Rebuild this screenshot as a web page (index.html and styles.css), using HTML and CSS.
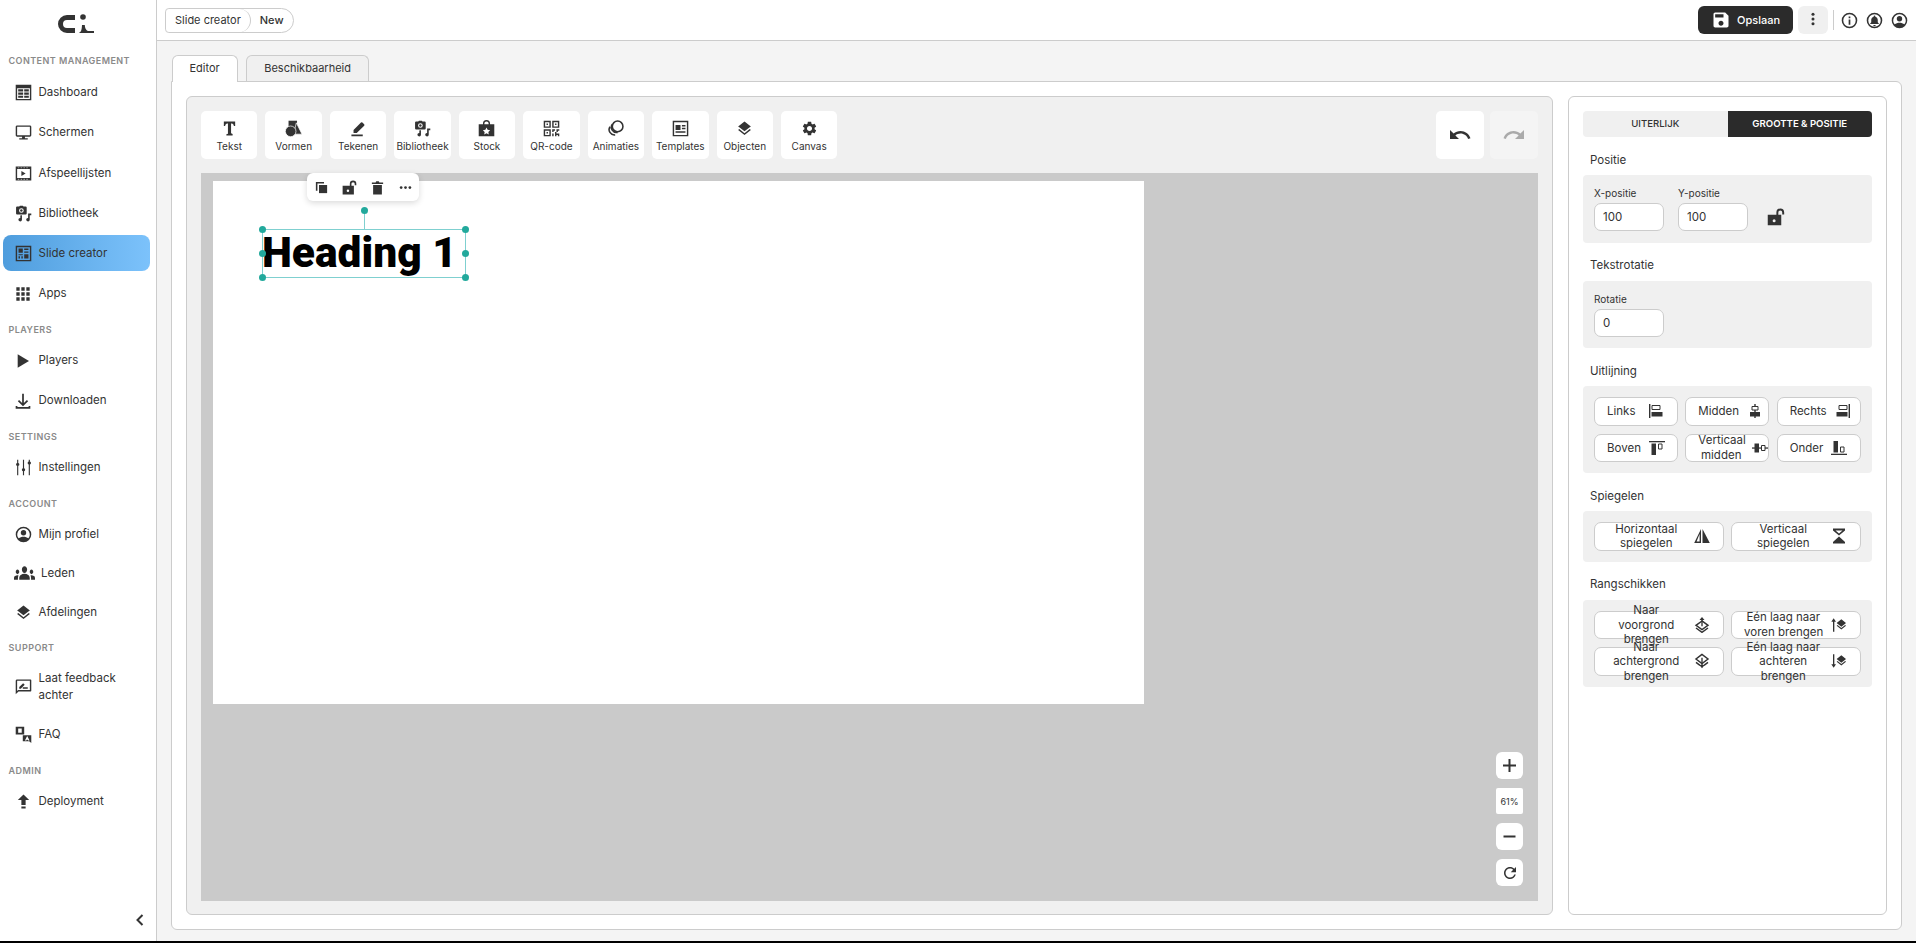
FILE: index.html
```html
<!DOCTYPE html>
<html lang="en">
<head>
    <meta charset="UTF-8">
    <meta name="viewport" content="width=device-width, initial-scale=1.0">
    <title>Slide creator</title>
    <link rel="stylesheet" href="styles.css">
</head>
<body>
    <!-- icon sprite -->
    <svg class="sprite" xmlns="http://www.w3.org/2000/svg">
        <symbol id="i-dashboard" viewBox="0 0 24 24"><path fill-rule="evenodd" d="M1 1h22v22H1zM3 6v15h18V6z"/><path d="M3 2.500h18V4H3zM4.500 7.500h7v3h-7zM13 7.500h6.500v3H13zM4.500 12h7v3h-7zM13 12h6.500v3H13zM4.500 16.500h7v3h-7zM13 16.500h6.500v3H13z"/></symbol>
        <symbol id="i-screen" viewBox="0 0 24 24"><path d="M21 2H3c-1.100 0-2 .9-2 2v12c0 1.100.9 2 2 2h7v2H6v2h12v-2h-4v-2h7c1.100 0 2-.9 2-2V4c0-1.100-.9-2-2-2zm0 14H3V4h18v12z"/></symbol>
        <symbol id="i-playlist" viewBox="0 0 24 24"><path fill-rule="evenodd" d="M1 2h22v20H1zM3 5.500v13h18v-13z"/><path d="M9 8.500v7l6-3.500z"/><path d="M4 3h2v1.500H4zM8 3h2v1.500H8zM12 3h2v1.500h-2zM16 3h2v1.500h-2zM4 19.500h2V21H4zM8 19.500h2V21H8zM12 19.500h2V21h-2zM16 19.500h2V21h-2z" fill="#999"/></symbol>
        <symbol id="i-library" viewBox="0 0 24 24"><path fill-rule="evenodd" d="M3 2h3l1-1h4l1 1h3a1.500 1.500 0 0 1 1.500 1.500V12a1.500 1.500 0 0 1-1.500 1.500H3A1.500 1.500 0 0 1 1.500 12V3.500A1.500 1.500 0 0 1 3 2zm6 2.500a3.300 3.300 0 1 0 0 6.600 3.300 3.300 0 0 0 0-6.600z"/><circle cx="9" cy="7.800" r="1.700"/><path d="M18.500 12h4.500v2.500h-2.200v6.200a2.500 2.500 0 1 1-2.300-2.500zM8 14.500h1.800v6.200a2.500 2.500 0 1 1-2.300-2.500V15z"/></symbol>
        <symbol id="i-slide" viewBox="0 0 24 24"><path fill-rule="evenodd" d="M1 1h22v22H1zM3 3v18h18V3z"/><path d="M5 5h6v6H5zM13 5h6v2h-6zM13 9h6v2h-6zM5 13h6v1.500H5zM5 16h2v3H5zM9 16h2v3H9zM13 13h6v6h-6z"/></symbol>
        <symbol id="i-apps" viewBox="0 0 24 24"><path d="M2 2h5v5H2zM9.500 2h5v5h-5zM17 2h5v5h-5zM2 9.500h5v5H2zM9.500 9.500h5v5h-5zM17 9.500h5v5h-5zM2 17h5v5H2zM9.500 17h5v5h-5zM17 17h5v5h-5z"/></symbol>
        <symbol id="i-play" viewBox="0 0 24 24"><path d="M4 2v20l17-10z"/></symbol>
        <symbol id="i-download" viewBox="0 0 24 24"><path d="M10.700 1h2.600v14l4.600-4.600 1.800 1.800-7.700 7.600-7.700-7.600 1.800-1.800 4.600 4.600zM1 19.500h2.600v1.400h16.800v-1.400H23v4H1z"/></symbol>
        <symbol id="i-tune" viewBox="0 0 24 24"><path d="M3 1h1.600v4.500a2.200 2.200 0 0 1 0 4.200V23H3V9.700a2.200 2.200 0 0 1 0-4.200zM11.200 1h1.600v12.200a2.200 2.200 0 0 1 0 4.200V23h-1.600v-5.600a2.200 2.200 0 0 1 0-4.200zM19.400 1H21v2.500a2.200 2.200 0 0 1 0 4.200V23h-1.600V7.700a2.200 2.200 0 0 1 0-4.200z"/></symbol>
        <symbol id="i-account" viewBox="0 0 24 24"><path fill-rule="evenodd" d="M12 1a11 11 0 1 1 0 22 11 11 0 0 1 0-22zm0 2.200a8.800 8.800 0 0 0-6.900 14.200C7 15.700 9.400 15 12 15s5 .7 6.900 2.400A8.800 8.800 0 0 0 12 3.200z"/><circle cx="12" cy="9.500" r="3.800"/></symbol>
        <symbol id="i-groups" viewBox="0 5 24 14" preserveAspectRatio="none"><path d="M12 12.750c1.630 0 3.070.39 4.240.9 1.080.48 1.760 1.560 1.760 2.730V18H6v-1.610c0-1.180.68-2.260 1.760-2.730 1.170-.52 2.610-.91 4.240-.91zM4 13c1.100 0 2-.9 2-2s-.9-2-2-2-2 .9-2 2 .9 2 2 2zm1.130 1.100c-.37-.06-.74-.1-1.130-.1-.99 0-1.930.21-2.780.58C.48 14.900 0 15.620 0 16.430V18h4.500v-1.610c0-.83.23-1.610.63-2.290zM20 13c1.100 0 2-.9 2-2s-.9-2-2-2-2 .9-2 2 .9 2 2 2zm4 3.430c0-.81-.48-1.530-1.220-1.850-.85-.37-1.790-.58-2.780-.58-.39 0-.76.04-1.130.1.400.68.63 1.460.63 2.290V18H24v-1.570zM12 6c1.660 0 3 1.340 3 3s-1.340 3-3 3-3-1.340-3-3 1.340-3 3-3z"/></symbol>
        <symbol id="i-layers" viewBox="0 0 24 24"><path d="M11.990 18.540l-7.370-5.730L3 14.070l9 7 9-7-1.630-1.270-7.380 5.740zM12 16l7.360-5.730L21 9l-9-7-9 7 1.630 1.270L12 16z"/></symbol>
        <symbol id="i-feedback" viewBox="0 0 24 24"><path fill-rule="evenodd" d="M3 2h19a1 1 0 0 1 1 1v15a1 1 0 0 1-1 1H5l-4 4V4a2 2 0 0 1 2-2zm0 2v14.500L4.500 17H21V4z"/><path d="M6 15v-2.200l5.500-5.500 2.200 2.200L8.200 15zM11 13h7v2h-7z"/></symbol>
        <symbol id="i-faq" viewBox="0 0 24 24"><path fill-rule="evenodd" d="M1 1h12v11H1zm3.500 2.500v6h5v-6z"/><path fill-rule="evenodd" d="M11 13h12v11l-3-2.500h-9zm6 1.500l-3 6h2l.5-1.200h1.500l.5 1.200h2l-3-6z"/></symbol>
        <symbol id="i-deploy" viewBox="0 0 24 24"><path d="M12 2l8 8h-5v7H9v-7H4zM9 19h6v3H9z"/></symbol>
        <symbol id="i-save" viewBox="0 0 24 24"><path d="M17 3H5c-1.110 0-2 .9-2 2v14c0 1.100.89 2 2 2h14c1.100 0 2-.9 2-2V7l-4-4zm-5 16c-1.660 0-3-1.340-3-3s1.340-3 3-3 3 1.340 3 3-1.340 3-3 3zm3-10H5V5h10v4z"/></symbol>
        <symbol id="i-info" viewBox="0 0 24 24"><path fill-rule="evenodd" d="M12 1a11 11 0 1 1 0 22 11 11 0 0 1 0-22zm0 2.200a8.800 8.800 0 1 0 0 17.600 8.800 8.800 0 0 0 0-17.600z"/><path d="M10.800 10.500h2.400V18h-2.400zM10.800 6.300h2.400v2.400h-2.400z"/></symbol>
        <symbol id="i-bell" viewBox="0 0 24 24"><path fill-rule="evenodd" d="M12 1a11 11 0 1 1 0 22 11 11 0 0 1 0-22zm0 2.200a8.800 8.800 0 1 0 0 17.600 8.800 8.800 0 0 0 0-17.600z"/><path d="M12 5c.7 0 1.200.5 1.200 1.200v.5c2.200.5 3.400 2.400 3.400 4.600v3.300l1.500 1.700v.8H5.900v-.8l1.500-1.700v-3.300c0-2.200 1.200-4.100 3.400-4.600v-.5C10.800 5.500 11.300 5 12 5zM10.300 18.500h3.400a1.700 1.700 0 0 1-3.400 0z"/></symbol>
        <symbol id="i-text" viewBox="0 0 24 24"><path d="M4 2h16v6.500h-1.800c-.4-2.300-1.200-3.500-3.200-3.500h-.8v13.800l2.200.9V22H7.600v-1.800l2.200-.9V5H9C7 5 6.200 6.200 5.800 8.500H4z"/></symbol>
        <symbol id="i-shapes" viewBox="0 0 24 24"><path d="M5 1h12v11H5z"/><path d="M16 4l8 16H12z" stroke="#fff"/><circle cx="8" cy="16" r="7.500" stroke="#fff"/></symbol>
        <symbol id="i-draw" viewBox="0 0 24 24"><path d="M2 20.500h16v2.500H2zM5 18.500v-4.500L15.500 3.500a1.500 1.500 0 0 1 2 0l2.500 2.500a1.500 1.500 0 0 1 0 2L9.500 18.500z"/></symbol>
        <symbol id="i-stock" viewBox="0 0 24 24"><path fill-rule="evenodd" d="M7 6V5a5 5 0 0 1 10 0v1h6v17H1V6zm2 0h6V5a3 3 0 0 0-6 0zm3 4.500l-1.600 3.300-3.600.5 2.600 2.500-.6 3.600 3.200-1.700 3.200 1.700-.6-3.600 2.600-2.500-3.600-.5z"/></symbol>
        <symbol id="i-qr" viewBox="0 0 24 24"><path fill-rule="evenodd" d="M1 1h10v10H1zm2 2v6h6V3zM13 1h10v10H13zm2 2v6h6V3zM1 13h10v10H1zm2 2v6h6v-6z"/><path d="M5 5h2v2H5zM17 5h2v2h-2zM5 17h2v2H5zM13 13h4v2h-2v2h-2zM19 13h4v2h-2v2h-2zM13 19h2v4h-2zM17 17h2v2h4v4h-2v-2h-2v2h-2z"/></symbol>
        <symbol id="i-anim" viewBox="0 0 24 24"><g fill="none" stroke="currentColor" stroke-width="2.200"><circle cx="15" cy="9" r="7.500"/><path d="M7.500 5.800A7.500 7.500 0 0 0 15 17.500"/><path d="M4.200 9.500A7.500 7.500 0 0 0 11.500 21"/></g></symbol>
        <symbol id="i-template" viewBox="0 0 24 24"><path fill-rule="evenodd" d="M1 1h22v22H1zM3 3v18h18V3z"/><path d="M5 7h7v7H5zM14 7h5v2h-5zM14 11h5v2h-5zM5 16h14v2H5z"/></symbol>
        <symbol id="i-gear" viewBox="0 0 24 24"><path d="M19.140 12.940c.04-.3.06-.61.06-.94 0-.32-.02-.64-.07-.94l2.030-1.580c.18-.14.23-.41.12-.61l-1.920-3.320c-.12-.22-.37-.29-.59-.22l-2.390.96c-.5-.38-1.030-.7-1.620-.94l-.36-2.540c-.04-.24-.24-.41-.48-.41h-3.840c-.24 0-.43.17-.47.41l-.36 2.540c-.59.24-1.130.57-1.620.94l-2.390-.96c-.22-.08-.47 0-.59.22L2.740 8.870c-.12.21-.08.47.12.61l2.030 1.580c-.05.3-.09.63-.09.94s.02.64.07.94l-2.030 1.580c-.18.14-.23.41-.12.61l1.920 3.320c.12.22.37.29.59.22l2.390-.96c.5.38 1.030.7 1.620.94l.36 2.540c.05.24.24.41.48.41h3.840c.24 0 .44-.17.47-.41l.36-2.540c.59-.24 1.130-.56 1.620-.94l2.390.96c.22.08.47 0 .59-.22l1.920-3.320c.12-.22.07-.47-.12-.61l-2.010-1.580zM12 15.600c-1.980 0-3.600-1.620-3.600-3.600s1.620-3.600 3.600-3.600 3.600 1.620 3.600 3.600-1.620 3.600-3.600 3.600z"/></symbol>
        <symbol id="i-undo" viewBox="0 0 24 24"><path d="M12.500 8c-2.650 0-5.050.99-6.900 2.600L2 7v9h9l-3.620-3.620c1.390-1.160 3.160-1.880 5.120-1.880 3.540 0 6.550 2.310 7.600 5.500l2.370-.78C21.080 11.030 17.150 8 12.500 8z"/></symbol>
        <symbol id="i-redo" viewBox="0 0 24 24"><path d="M18.400 10.600C16.550 8.990 14.150 8 11.500 8c-4.650 0-8.580 3.030-9.960 7.220L3.900 16c1.050-3.190 4.050-5.500 7.600-5.500 1.950 0 3.730.72 5.120 1.880L13 16h9V7l-3.600 3.600z"/></symbol>
        <symbol id="i-copy" viewBox="0 0 24 24"><path d="M3 3h13v2.500H5.500V17H3z"/><path d="M8 8h13v13H8z"/></symbol>
        <symbol id="i-lock" viewBox="0 0 24 24"><path fill-rule="evenodd" d="M1 9h11.500V6a5.200 5.200 0 0 1 10.400 0v2.500h-2.600V6a2.600 2.600 0 0 0-5.200 0v3H19v14H1zm8.500 6a2 2 0 1 0 0 4 2 2 0 0 0 0-4z"/></symbol>
        <symbol id="i-trash" viewBox="0 0 24 24"><path d="M5 8h14v15H5zM3 4h6l1-2h4l1 2h6v2.500H3z"/></symbol>
        <symbol id="i-more" viewBox="0 0 24 24"><circle cx="5" cy="12" r="2.200"/><circle cx="12" cy="12" r="2.200"/><circle cx="19" cy="12" r="2.200"/></symbol>
        <symbol id="i-left" viewBox="0 0 16 16"><path d="M1 1h1.400v14H1z"/><path d="M4 2.500h8v4H4z" fill="none" stroke="currentColor"/><path d="M3.500 9h11v4.500h-11z"/></symbol>
        <symbol id="i-center" viewBox="0 0 16 16"><path d="M7.300 1h1.400v14H7.300z"/><path d="M5 3.500h6v3.500H5z" fill="#fff" stroke="currentColor"/><path d="M3 9h10v4.500H3z"/></symbol>
        <symbol id="i-right" viewBox="0 0 16 16"><path d="M13.600 1H15v14h-1.400z"/><path d="M4 2.500h8v4H4z" fill="none" stroke="currentColor"/><path d="M1.500 9h11v4.500h-11z"/></symbol>
        <symbol id="i-top" viewBox="0 0 16 16"><path d="M0 1h16v1.300H0z"/><path d="M2.500 3.500H7V15H2.500z"/><path d="M9.500 4h3.500v5H9.500z" fill="none" stroke="currentColor"/></symbol>
        <symbol id="i-middle" viewBox="0 0 16 16"><path d="M0 7.400h16v1.300H0z"/><path d="M2.500 3.500H7v9H2.500z"/><path d="M9.500 5.500h3.500v5H9.500z" fill="#fff" stroke="currentColor"/></symbol>
        <symbol id="i-bottom" viewBox="0 0 16 16"><path d="M0 13.700h16V15H0z"/><path d="M2.500 1H7v11.500H2.500z"/><path d="M9.500 7h3.500v5H9.500z" fill="none" stroke="currentColor"/></symbol>
        <symbol id="i-fliph" viewBox="0 0 16 16"><path fill-rule="evenodd" d="M7 1v14H.2zM5.600 6L2.600 13.500h3z"/><path d="M8.500 1v14h7.300z"/></symbol>
        <symbol id="i-flipv" viewBox="0 0 16 16"><path fill-rule="evenodd" d="M2 .5h12v2L8 7.500l-6-5zm2.500 2L8 5.400l3.500-2.900z"/><path d="M8 8.500l6 5.500v1.500H2V14z"/></symbol>
        <symbol id="i-tofront" viewBox="0 0 24 24"><g fill="none" stroke="currentColor" stroke-width="2.200"><path d="M12 6L3 12.500 12 19l9-6.500z"/><path d="M3 16.500L12 23l9-6.500"/></g><path d="M12 0l3.800 4.500h-2.800V14h-2V4.500H8.200z"/></symbol>
        <symbol id="i-toback" viewBox="0 0 24 24"><g fill="none" stroke="currentColor" stroke-width="2.200"><path d="M12 2L3 9l9 7 9-7z"/><path d="M3 14l6 4.500M21 14l-6 4.500"/></g><path d="M11 7h2v11h3l-4 5-4-5h3z"/></symbol>
        <symbol id="i-forward" viewBox="0 0 24 24"><path d="M4 2l3.500 5H5v15H3V7H.5zM15.500 16.500l-5.700-4.400-1.300 1 7 5.500 7-5.500-1.300-1zM15.500 14.500l5.700-4.500L22.500 9l-7-5.500L8.500 9l1.300 1z"/></symbol>
        <symbol id="i-backward" viewBox="0 0 24 24"><path d="M3 2h2v15h2.500L4 22 .5 17H3zM15.500 16.500l-5.700-4.400-1.300 1 7 5.500 7-5.500-1.300-1zM15.500 14.500l5.700-4.500L22.500 9l-7-5.500L8.500 9l1.300 1z"/></symbol>
    </svg>

    <div class="app">
        <aside class="sidebar">
            <div class="logo">
                <svg width="36" height="20" viewBox="0 0 36 20">
                    <path d="M17 3.500H9a6.500 6.500 0 0 0 0 13h8" fill="none" stroke="#333" stroke-width="5"/>
                    <circle cx="25" cy="3" r="2.800" fill="#333"/>
                    <path d="M20 19c2.500 0 3.800-2 4-8h2.800c.2 4.300 2 6 4.200 6h5v2z" fill="#333"/>
                </svg>
            </div>

            <div class="nav-label">Content management</div>
            <a class="nav-item"><svg class="nav-icon"><use href="#i-dashboard"/></svg>Dashboard</a>
            <a class="nav-item"><svg class="nav-icon"><use href="#i-screen"/></svg>Schermen</a>
            <a class="nav-item"><svg class="nav-icon"><use href="#i-playlist"/></svg>Afspeellijsten</a>
            <a class="nav-item"><svg class="nav-icon"><use href="#i-library"/></svg>Bibliotheek</a>
            <a class="nav-item active"><svg class="nav-icon"><use href="#i-slide"/></svg>Slide creator</a>
            <a class="nav-item"><svg class="nav-icon small"><use href="#i-apps"/></svg>Apps</a>

            <div class="nav-label">Players</div>
            <a class="nav-item"><svg class="nav-icon small"><use href="#i-play"/></svg>Players</a>
            <a class="nav-item"><svg class="nav-icon small"><use href="#i-download"/></svg>Downloaden</a>

            <div class="nav-label">Settings</div>
            <a class="nav-item"><svg class="nav-icon"><use href="#i-tune"/></svg>Instellingen</a>

            <div class="nav-label">Account</div>
            <a class="nav-item"><svg class="nav-icon"><use href="#i-account"/></svg>Mijn profiel</a>
            <a class="nav-item narrow"><svg class="nav-icon wide"><use href="#i-groups"/></svg>Leden</a>
            <a class="nav-item"><svg class="nav-icon"><use href="#i-layers"/></svg>Afdelingen</a>

            <div class="nav-label">Support</div>
            <a class="nav-item tall"><svg class="nav-icon"><use href="#i-feedback"/></svg><span>Laat feedback<br>achter</span></a>
            <a class="nav-item"><svg class="nav-icon"><use href="#i-faq"/></svg>FAQ</a>

            <div class="nav-label">Admin</div>
            <a class="nav-item"><svg class="nav-icon"><use href="#i-deploy"/></svg>Deployment</a>

            <div class="collapse">
                <svg width="10" height="14" viewBox="0 0 10 14"><path d="M7.500 2L2.500 7l5 5" fill="none" stroke="#333" stroke-width="2"/></svg>
            </div>
        </aside>

        <div class="main">
            <header class="topbar">
                <div class="crumbs">
                    <span class="crumb">Slide creator</span>
                    <span class="crumb current">New</span>
                </div>
                <div class="top-actions">
                    <button class="save-btn"><svg class="save-icon"><use href="#i-save"/></svg>Opslaan</button>
                    <button class="dots-btn">
                        <svg width="14" height="14" viewBox="0 0 24 24"><circle cx="12" cy="4" r="2.600"/><circle cx="12" cy="12" r="2.600"/><circle cx="12" cy="20" r="2.600"/></svg>
                    </button>
                    <span class="top-divider"></span>
                    <svg class="top-icon"><use href="#i-info"/></svg>
                    <svg class="top-icon"><use href="#i-bell"/></svg>
                    <svg class="top-icon"><use href="#i-account"/></svg>
                </div>
            </header>

            <div class="content">
                <div class="tabs">
                    <div class="tab selected">Editor</div>
                    <div class="tab">Beschikbaarheid</div>
                </div>

                <div class="panel">
                    <section class="editor">
                        <div class="toolbar">
                            <div class="tools">
                                <div class="tool"><svg><use href="#i-text"/></svg>Tekst</div>
                                <div class="tool"><svg><use href="#i-shapes"/></svg>Vormen</div>
                                <div class="tool"><svg><use href="#i-draw"/></svg>Tekenen</div>
                                <div class="tool"><svg><use href="#i-library"/></svg>Bibliotheek</div>
                                <div class="tool"><svg><use href="#i-stock"/></svg>Stock</div>
                                <div class="tool"><svg><use href="#i-qr"/></svg>QR-code</div>
                                <div class="tool"><svg><use href="#i-anim"/></svg>Animaties</div>
                                <div class="tool"><svg><use href="#i-template"/></svg>Templates</div>
                                <div class="tool"><svg><use href="#i-layers"/></svg>Objecten</div>
                                <div class="tool"><svg><use href="#i-gear"/></svg>Canvas</div>
                            </div>
                            <div class="history">
                                <div class="history-btn"><svg><use href="#i-undo"/></svg></div>
                                <div class="history-btn off"><svg><use href="#i-redo"/></svg></div>
                            </div>
                        </div>

                        <div class="canvas">
                            <div class="slide">
                                <div class="selection">
                                    <div class="float-bar">
                                        <svg><use href="#i-copy"/></svg>
                                        <svg><use href="#i-lock"/></svg>
                                        <svg><use href="#i-trash"/></svg>
                                        <svg><use href="#i-more"/></svg>
                                    </div>
                                    <span class="rotate-line"></span>
                                    <span class="handle rotate"></span>
                                    <span class="handle tl"></span>
                                    <span class="handle tr"></span>
                                    <span class="handle ml"></span>
                                    <span class="handle mr"></span>
                                    <span class="handle bl"></span>
                                    <span class="handle br"></span>
                                    <div class="heading">Heading 1</div>
                                </div>
                            </div>

                            <div class="zoom-ctrl">
                                <div class="zoom-btn"><svg width="15" height="15" viewBox="0 0 15 15"><path d="M6.500 1h2v5.500H14v2H8.500V14h-2V8.500H1v-2h5.500z"/></svg></div>
                                <div class="zoom-btn pct">61%</div>
                                <div class="zoom-btn"><svg width="15" height="15" viewBox="0 0 15 15"><path d="M1.500 6.500h12v2h-12z"/></svg></div>
                                <div class="zoom-btn"><svg width="18" height="18" viewBox="0 0 24 24"><path d="M17.650 6.350C16.200 4.900 14.210 4 12 4c-4.420 0-7.990 3.580-7.990 8s3.570 8 7.990 8c3.730 0 6.840-2.550 7.730-6h-2.080c-.82 2.330-3.040 4-5.650 4-3.310 0-6-2.690-6-6s2.690-6 6-6c1.660 0 3.140.69 4.220 1.780L13 11h7V4l-2.350 2.350z"/></svg></div>
                            </div>
                        </div>
                    </section>

                    <aside class="props">
                        <div class="props-tabs">
                            <div class="props-tab">UITERLIJK</div>
                            <div class="props-tab on">GROOTTE &amp; POSITIE</div>
                        </div>

                        <h3>Positie</h3>
                        <div class="group fields">
                            <label class="field">X-positie<input type="text" value="100"></label>
                            <label class="field">Y-positie<input type="text" value="100"></label>
                            <svg class="lock"><use href="#i-lock"/></svg>
                        </div>

                        <h3>Tekstrotatie</h3>
                        <div class="group fields">
                            <label class="field">Rotatie<input type="text" value="0"></label>
                        </div>

                        <h3>Uitlijning</h3>
                        <div class="group grid3">
                            <div class="pbtn"><span>Links</span><svg><use href="#i-left"/></svg></div>
                            <div class="pbtn"><span>Midden</span><svg><use href="#i-center"/></svg></div>
                            <div class="pbtn"><span>Rechts</span><svg><use href="#i-right"/></svg></div>
                            <div class="pbtn"><span>Boven</span><svg><use href="#i-top"/></svg></div>
                            <div class="pbtn"><span class="lines">Verticaal<br>midden</span><svg><use href="#i-middle"/></svg></div>
                            <div class="pbtn"><span>Onder</span><svg><use href="#i-bottom"/></svg></div>
                        </div>

                        <h3>Spiegelen</h3>
                        <div class="group grid2">
                            <div class="pbtn"><span>Horizontaal spiegelen</span><svg><use href="#i-fliph"/></svg></div>
                            <div class="pbtn"><span>Verticaal spiegelen</span><svg><use href="#i-flipv"/></svg></div>
                        </div>

                        <h3>Rangschikken</h3>
                        <div class="group grid2">
                            <div class="pbtn"><span>Naar voorgrond brengen</span><svg><use href="#i-tofront"/></svg></div>
                            <div class="pbtn"><span class="lines">Eén laag naar<br>voren brengen</span><svg><use href="#i-forward"/></svg></div>
                            <div class="pbtn"><span>Naar achtergrond brengen</span><svg><use href="#i-toback"/></svg></div>
                            <div class="pbtn"><span>Eén laag naar achteren brengen</span><svg><use href="#i-backward"/></svg></div>
                        </div>
                    </aside>
                </div>
            </div>
        </div>
    </div>
    <div class="screen-edge"></div>
</body>
</html>
```
FILE: styles.css
```css
* {
    box-sizing: border-box;
}

body {
    font-family: Inter, "Liberation Sans", sans-serif;
    margin: 0;
    height: 943px;
    overflow: hidden;
    background-color: #f4f4f4;
    color: #333;
    fill: #333;
}

.sprite {
    display: none;
}

.app {
    display: flex;
    height: 941px;
}

.screen-edge {
    height: 2px;
    background-color: #000;
}

/* sidebar */
.sidebar {
    width: 157px;
    flex: none;
    display: flex;
    flex-direction: column;
    background: white;
    border-right: 1px solid #ccc;
}

.logo {
    height: 45px;
    padding: 14px 0 0 58px;
}

.nav-label {
    padding: 10px 0 4.5px 8.5px;
    font-size: 9px;
    line-height: 12px;
    font-weight: 600;
    letter-spacing: 0.45px;
    text-transform: uppercase;
    color: #8a8a8a;
}

.nav-item + .nav-label {
    padding: 11px 0 3.5px 8.5px;
}

.nav-item {
    display: flex;
    align-items: center;
    gap: 3.5px;
    height: 36.25px;
    flex: none;
    margin: 2px 6px 2px 3px;
    padding: 2px 0 0 8px;
    border-radius: 8px;
    font-size: 11.5px;
    line-height: 17px;
    color: #333;
}

.nav-item.narrow {
    height: 33.5px;
}

.nav-item.tall {
    height: 51.5px;
}

.nav-item.active {
    background: linear-gradient(90deg, #4f9ddd, #7cc2fb);
}

.nav-icon {
    width: 17px;
    height: 17px;
    margin: 0 3.5px;
    flex: none;
}

.nav-icon.small {
    width: 16px;
    height: 16px;
    margin: 0 4px;
}

.nav-icon.wide {
    width: 21px;
    height: 16px;
    margin: 0 3px 0 2.5px;
}

.collapse {
    margin-top: auto;
    padding: 0 11px 15px 0;
    text-align: right;
    height: 30px;
}

/* top bar */
.main {
    flex: 1;
    min-width: 0;
    display: flex;
    flex-direction: column;
}

.topbar {
    height: 41px;
    flex: none;
    display: flex;
    align-items: center;
    justify-content: space-between;
    padding: 0 0 0 8px;
    background: white;
    border-bottom: 1px solid #ccc;
}

.crumbs {
    display: flex;
    height: 25px;
    border: 1px solid #ccc;
    border-radius: 4px 13px 13px 4px;
    font-size: 11px;
    line-height: 23px;
}

.crumb {
    padding: 0 9px;
}

.crumb:first-child {
    border-right: 1px solid #ccc;
    border-radius: 0 12px 12px 0;
}

.crumb.current {
    padding: 0 9px;
    font-weight: 500;
}

.top-actions {
    display: flex;
    align-items: center;
}

.save-btn {
    display: flex;
    align-items: center;
    gap: 6.5px;
    width: 95px;
    height: 28px;
    padding: 0 0 0 12.5px;
    border: 0;
    border-radius: 6px;
    background-color: #2b2b2b;
    color: white;
    font: 500 11px Inter, sans-serif;
}

.save-icon {
    width: 20px;
    height: 20px;
    fill: white;
}

.dots-btn {
    width: 30px;
    height: 28px;
    margin-left: 5px;
    padding: 0;
    border: 0;
    border-radius: 6px;
    background-color: #f0f0f0;
}

.top-divider {
    width: 1px;
    height: 20px;
    margin: 0 7px 0 5px;
    background-color: #ccc;
}

.top-icon {
    width: 17px;
    height: 17px;
    margin-right: 8px;
}

/* page */
.content {
    flex: 1;
    min-height: 0;
    display: flex;
    flex-direction: column;
    padding: 14px 14px 11px;
}

.tabs {
    display: flex;
    gap: 8.5px;
    padding-left: 0.5px;
    height: 26px;
    position: relative;
    z-index: 1;
}

.tab {
    padding: 0 17px;
    height: 26px;
    border: 1px solid #ccc;
    border-bottom: 0;
    border-radius: 6px 6px 0 0;
    background-color: #f0f0f0;
    font-size: 11px;
    line-height: 25px;
}

.tab.selected {
    height: 27px;
    background: white;
}

.panel {
    flex: 1;
    min-height: 0;
    display: flex;
    gap: 15px;
    padding: 14px;
    background: white;
    border: 1px solid #ccc;
    border-radius: 0 6px 6px 6px;
}

/* editor */
.editor {
    flex: 1;
    min-width: 0;
    display: flex;
    flex-direction: column;
    gap: 14px;
    padding: 14px 14px 13px;
    background-color: #f0f0f0;
    border: 1px solid #ccc;
    border-radius: 6px;
}

.toolbar {
    display: flex;
    justify-content: space-between;
}

.tools {
    display: flex;
    gap: 8px;
}

.tool {
    width: 56.44px;
    height: 48px;
    display: flex;
    flex-direction: column;
    align-items: center;
    padding-top: 8.5px;
    background: white;
    border-radius: 5px;
    font-size: 10px;
    line-height: 14px;
    white-space: nowrap;
}

.tool svg {
    width: 17px;
    height: 17px;
    margin-bottom: 2.5px;
    color: #333;
}

.history {
    display: flex;
    gap: 6px;
}

.history-btn {
    width: 48px;
    height: 48px;
    display: flex;
    align-items: center;
    justify-content: center;
    background: white;
    border-radius: 5px;
}

.history-btn svg {
    width: 24px;
    height: 24px;
}

.history-btn.off {
    background-color: #f4f4f4;
    fill: #aaa;
}

.canvas {
    flex: 1;
    position: relative;
    padding: 8px 12px;
    background-color: #cacaca;
}

.slide {
    position: relative;
    width: 931px;
    height: 523px;
    background: white;
}

.selection {
    position: absolute;
    left: 49px;
    top: 48px;
    width: 204px;
    height: 49px;
    border: 1px solid #7fd0d0;
}

.heading {
    margin-left: -1px;
    font-family: Roboto, sans-serif;
    font-size: 42.5px;
    font-weight: 900;
    line-height: 46px;
    white-space: nowrap;
    color: #000;
}

.handle {
    position: absolute;
    width: 7px;
    height: 7px;
    border-radius: 50%;
    background-color: #22a99c;
}

.tl { left: -4px; top: -4px; }
.tr { right: -4px; top: -4px; }
.ml { left: -4px; top: 20px; }
.mr { right: -4px; top: 20px; }
.bl { left: -4px; bottom: -4px; }
.br { right: -4px; bottom: -4px; }
.rotate { left: 97.5px; top: -23px; }

.rotate-line {
    position: absolute;
    left: 100.5px;
    top: -17px;
    width: 1px;
    height: 17px;
    background-color: #7fd0d0;
}

.float-bar {
    position: absolute;
    left: 44px;
    top: -57px;
    width: 112px;
    height: 28px;
    display: grid;
    grid-template-columns: repeat(4, 1fr);
    align-items: center;
    justify-items: center;
    background: white;
    border-radius: 6px;
    box-shadow: 0 2px 6px rgba(0, 0, 0, 0.15);
}

.float-bar svg {
    width: 15px;
    height: 15px;
}

.zoom-ctrl {
    position: absolute;
    right: 15px;
    bottom: 15px;
    display: flex;
    flex-direction: column;
    gap: 9px;
}

.zoom-btn {
    width: 27px;
    height: 27px;
    display: flex;
    align-items: center;
    justify-content: center;
    background: white;
    border-radius: 6px;
}

.zoom-btn.pct {
    height: 26px;
    border-radius: 2px;
    font-size: 9px;
}

/* right panel */
.props {
    width: 319px;
    flex: none;
    padding: 14px;
    background: white;
    border: 1px solid #ccc;
    border-radius: 6px;
}

.props-tabs {
    display: flex;
    height: 26px;
    background-color: #f0f0f0;
    border-radius: 4px;
    overflow: hidden;
}

.props-tab {
    flex: 1;
    text-align: center;
    font-size: 9.6px;
    font-weight: 500;
    line-height: 26px;
}

.props-tab.on {
    background-color: #2b2b2b;
    color: white;
    font-weight: 600;
}

h3 {
    margin: 0;
    padding: 14.5px 0 7.5px 7px;
    font-size: 11.5px;
    font-weight: 400;
    line-height: 16px;
}

.group {
    padding: 11px 11.5px 11px 11px;
    background-color: #f0f0f0;
    border-radius: 4px;
}

.fields {
    display: flex;
    gap: 14px;
    height: 67.6px;
}

.field {
    display: flex;
    flex-direction: column;
    width: 70px;
    font-size: 10px;
    line-height: 14px;
}

.field input {
    width: 100%;
    height: 28px;
    margin-top: 3px;
    padding: 0 8px;
    background: white;
    border: 1px solid #ccc;
    border-radius: 7px;
    color: #333;
    font: 11.5px Inter, sans-serif;
}

.lock {
    width: 18px;
    height: 18px;
    margin: 22px 0 0 5px;
}

.grid3,
.grid2 {
    display: grid;
    gap: 8px 7.5px;
}

.grid3 {
    grid-template-columns: repeat(3, minmax(0, 1fr));
}

.grid2 {
    grid-template-columns: repeat(2, minmax(0, 1fr));
}

.pbtn {
    height: 28.5px;
    display: flex;
    align-items: center;
    gap: 8px;
    padding: 0 13px 0 12px;
    background: white;
    border: 1px solid #ccc;
    border-radius: 7px;
    font-size: 11.5px;
    line-height: 14.5px;
}

.pbtn svg {
    width: 16px;
    height: 16px;
    flex: none;
}

.pbtn .lines {
    white-space: nowrap;
}

.grid3 .pbtn {
    padding-right: 0;
}

.grid3 .pbtn span {
    min-width: 33px;
}

.grid3 .pbtn .lines,
.grid2 .pbtn span {
    text-align: center;
}

.grid2 .pbtn span {
    flex: 1;
    min-width: 0;
}
```
